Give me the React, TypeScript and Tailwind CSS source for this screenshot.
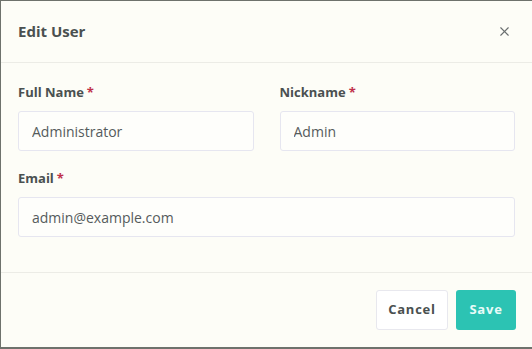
import { X } from 'lucide-react';

function Field({ label, value }: { label: string; value: string }) {
  return (
    <div className="flex flex-col">
      <label className="text-[13px] font-bold text-[#4a5050] leading-[18px] mb-[10px]">
        {label}
        <span className="text-[#c0304a] ml-[3px]">*</span>
      </label>
      <input
        readOnly
        value={value}
        className="h-[40px] w-full rounded-[3px] border border-[#e6e6f0] bg-[#fefefb] px-[13px] text-[14px] text-[#555b5c] outline-none"
      />
    </div>
  );
}

export default function App() {
  return (
    <div
      className="w-[532px] h-[349px] bg-[#6e726c] pt-px pl-px pb-[2px]"
      style={{ fontFamily: '"Open Sans", "Noto Sans", sans-serif' }}
    >
      <div className="h-full bg-[#fdfdf7] flex flex-col">
        {/* Header */}
        <div className="h-[62px] flex items-center justify-between pl-[17px] pr-[20px] border-b border-[#ecece6]">
          <h2 className="text-[15px] font-bold text-[#4a5050]">Edit User</h2>
          <button className="text-[#6b6f70]">
            <X className="w-[15px] h-[15px]" strokeWidth={1.8} />
          </button>
        </div>

        {/* Body */}
        <div className="flex-1 px-[17px] pt-[20px] border-b border-[#ecece6]">
          <div className="grid grid-cols-2 gap-x-[26px]">
            <Field label="Full Name" value="Administrator" />
            <Field label="Nickname" value="Admin" />
          </div>
          <div className="mt-[18px]">
            <Field label="Email" value="admin@example.com" />
          </div>
        </div>

        {/* Footer */}
        <div className="h-[74px] flex items-center justify-end gap-[8px] pr-[16px]">
          <button className="h-[40px] w-[72px] rounded-[3px] border border-[#e8e8ee] bg-white text-[13px] font-bold tracking-[0.06em] text-[#4a5050]">
            Cancel
          </button>
          <button className="h-[40px] w-[60px] rounded-[3px] bg-[#2cc3b3] text-[13px] font-bold tracking-[0.06em] text-[#e8fbf8]">
            Save
          </button>
        </div>
      </div>
    </div>
  );
}
